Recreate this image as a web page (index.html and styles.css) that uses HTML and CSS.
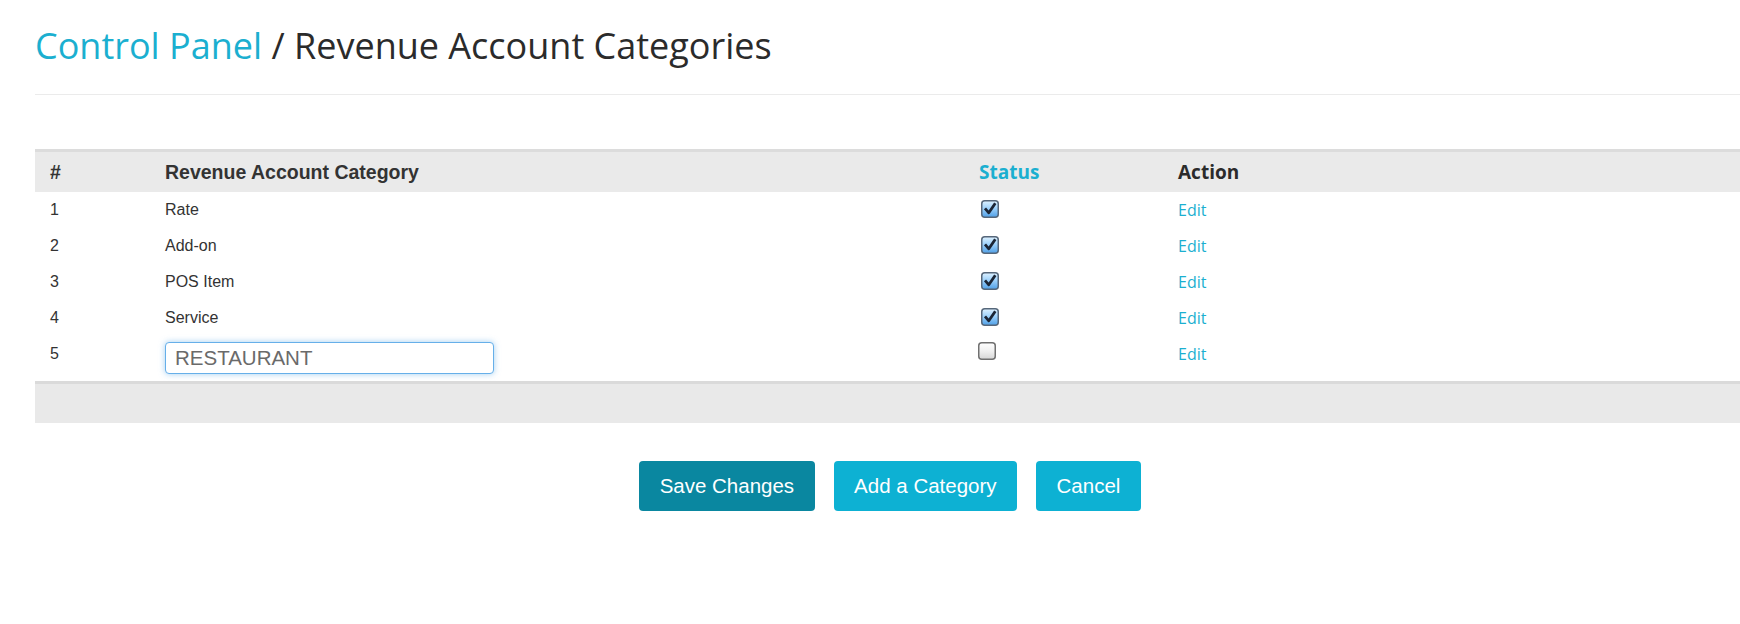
FILE: index.html
```html
<!DOCTYPE html>
<html>
<head>
<meta charset="utf-8">
<title>Revenue Account Categories</title>
<link rel="stylesheet" href="styles.css">
</head>
<body>
<svg class="defs" width="0" height="0" aria-hidden="true">
  <defs>
    <linearGradient id="cbOn" x1="0" y1="0" x2="0" y2="1">
      <stop offset="0" stop-color="#dff2ff"/>
      <stop offset="0.45" stop-color="#9fd2fb"/>
      <stop offset="1" stop-color="#4f9fe6"/>
    </linearGradient>
    <linearGradient id="cbOff" x1="0" y1="0" x2="0" y2="1">
      <stop offset="0" stop-color="#ffffff"/>
      <stop offset="0.5" stop-color="#f0f0f0"/>
      <stop offset="1" stop-color="#d6d6d6"/>
    </linearGradient>
  </defs>
</svg>
<div class="page">
  <h1 class="title"><a href="#">Control Panel</a> / Revenue Account Categories</h1>
  <hr class="rule">
  <table class="grid">
    <colgroup>
      <col class="c-num"><col class="c-name"><col class="c-status"><col>
    </colgroup>
    <thead>
      <tr>
        <th>#</th>
        <th>Revenue Account Category</th>
        <th class="os"><a href="#" class="sort">Status</a></th>
        <th class="os">Action</th>
      </tr>
    </thead>
    <tbody>
      <tr>
        <td>1</td><td>Rate</td>
        <td><svg class="cb" width="18" height="18" viewBox="0 0 18 18"><rect x="0.75" y="0.75" width="16.5" height="16.5" rx="3" fill="url(#cbOn)" stroke="#56677a" stroke-width="1.5"/><path d="M4 8.4 L7.8 12.8 L14.3 3.2" fill="none" stroke="#1b2535" stroke-width="2.8" stroke-linejoin="round"/></svg></td>
        <td class="act"><a href="#" class="edit">Edit</a></td>
      </tr>
      <tr>
        <td>2</td><td>Add-on</td>
        <td><svg class="cb" width="18" height="18" viewBox="0 0 18 18"><rect x="0.75" y="0.75" width="16.5" height="16.5" rx="3" fill="url(#cbOn)" stroke="#56677a" stroke-width="1.5"/><path d="M4 8.4 L7.8 12.8 L14.3 3.2" fill="none" stroke="#1b2535" stroke-width="2.8" stroke-linejoin="round"/></svg></td>
        <td class="act"><a href="#" class="edit">Edit</a></td>
      </tr>
      <tr>
        <td>3</td><td>POS Item</td>
        <td><svg class="cb" width="18" height="18" viewBox="0 0 18 18"><rect x="0.75" y="0.75" width="16.5" height="16.5" rx="3" fill="url(#cbOn)" stroke="#56677a" stroke-width="1.5"/><path d="M4 8.4 L7.8 12.8 L14.3 3.2" fill="none" stroke="#1b2535" stroke-width="2.8" stroke-linejoin="round"/></svg></td>
        <td class="act"><a href="#" class="edit">Edit</a></td>
      </tr>
      <tr>
        <td>4</td><td>Service</td>
        <td><svg class="cb" width="18" height="18" viewBox="0 0 18 18"><rect x="0.75" y="0.75" width="16.5" height="16.5" rx="3" fill="url(#cbOn)" stroke="#56677a" stroke-width="1.5"/><path d="M4 8.4 L7.8 12.8 L14.3 3.2" fill="none" stroke="#1b2535" stroke-width="2.8" stroke-linejoin="round"/></svg></td>
        <td class="act"><a href="#" class="edit">Edit</a></td>
      </tr>
      <tr class="editing">
        <td>5</td>
        <td><input class="name-input" type="text" value="RESTAURANT"></td>
        <td><svg class="cb cb-off" width="18" height="18" viewBox="0 0 18 18"><rect x="0.75" y="0.75" width="16.5" height="16.5" rx="3" fill="url(#cbOff)" stroke="#707070" stroke-width="1.5"/></svg></td>
        <td class="act"><a href="#" class="edit">Edit</a></td>
      </tr>
    </tbody>
    <tfoot>
      <tr><td colspan="4"><div class="foot"></div></td></tr>
    </tfoot>
  </table>
  <div class="actions">
    <button class="btn btn-save" type="button">Save Changes</button>
    <button class="btn" type="button">Add a Category</button>
    <button class="btn" type="button">Cancel</button>
  </div>
</div>
</body>
</html>
```
FILE: styles.css
```css
html, body {
  margin: 0;
  padding: 0;
  background: #ffffff;
  overflow-x: hidden;
}

body {
  font-family: "Liberation Sans", Arial, sans-serif;
  color: #333333;
}

.defs {
  position: absolute;
  width: 0;
  height: 0;
}

.page {
  width: 1710px;
  margin-left: 35px;
}

.title {
  font-family: "Open Sans", sans-serif;
  font-weight: 400;
  font-size: 36px;
  line-height: 40px;
  margin: 26px 0 0 0;
  color: #2b2b2b;
}

.title a {
  color: #1bafd0;
  text-decoration: none;
}

.rule {
  border: 0;
  border-top: 1px solid #ebebeb;
  height: 0;
  margin: 28px 0 54px 0;
}

.grid {
  width: 100%;
  table-layout: fixed;
  border-collapse: separate;
  border-spacing: 0;
}

.c-num { width: 115px; }
.c-name { width: 814px; }
.c-status { width: 199px; }

.grid thead th {
  background: #eaeaea;
  border-top: 3px solid #dcdcdc;
  text-align: left;
  font-size: 19.5px;
  font-weight: 700;
  line-height: 24px;
  padding: 8px 15px;
  color: #333333;
}

.grid thead th.os {
  font-family: "Open Sans", sans-serif;
  font-size: 19px;
  color: #2b2b2b;
}

.sort {
  color: #1bafd0;
  text-decoration: none;
}

.grid tbody td {
  font-size: 16px;
  line-height: 24px;
  height: 24px;
  padding: 6px 15px;
  vertical-align: top;
  color: #333333;
}

.grid tbody td.act {
  font-family: "Open Sans", sans-serif;
}

.grid tbody tr.editing td {
  padding-bottom: 7px;
}

.edit {
  font-family: "Open Sans", sans-serif;
  font-size: 16px;
  color: #1bafd0;
  text-decoration: none;
}

.cb {
  display: block;
  margin: 2px 0 0 2px;
}

.cb-off {
  margin: 0 0 0 -1px;
}

.name-input {
  display: block;
  box-sizing: border-box;
  width: 329px;
  height: 32px;
  margin: 0;
  padding: 0 9px;
  border: 1px solid #66afe9;
  border-radius: 4px;
  box-shadow: 0 0 6px rgba(102, 175, 233, 0.6);
  font-family: "Liberation Sans", Arial, sans-serif;
  font-size: 20.5px;
  color: #6a6a6a;
  background: #ffffff;
  outline: none;
}

.grid tfoot td {
  padding: 0;
  border-top: 3px solid #dadada;
  background: #e9e9e9;
}

.foot {
  height: 39px;
}

.actions {
  display: flex;
  justify-content: center;
  gap: 19px;
  margin-top: 38px;
}

.btn {
  height: 50px;
  padding: 0 20.5px;
  border: 0;
  border-radius: 4px;
  background: #0db1d3;
  color: #ffffff;
  font-family: "Liberation Sans", Arial, sans-serif;
  font-size: 20.5px;
  cursor: pointer;
}

.btn-save {
  background: #0a87a0;
}
```
